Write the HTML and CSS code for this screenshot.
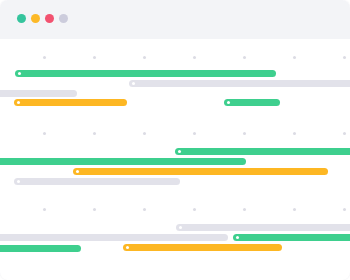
FILE: index.html
```html
<!DOCTYPE html>
<html lang="en">
  <head>
    <meta charset="UTF-8" />
    <meta name="viewport" content="width=device-width, initial-scale=1.0" />
    <title>Timeline</title>
    <link rel="stylesheet" href="styles.css">
  </head>
  <body>
    <div class="window">
      <div class="titlebar">
        <span class="light green"></span>
        <span class="light yellow"></span>
        <span class="light red"></span>
        <span class="light grey"></span>
      </div>
      <div class="chart">
        <div class="section">
          <div class="ticks">
            <span></span><span></span><span></span><span></span><span></span><span></span><span></span>
          </div>
          <div class="lanes">
            <div class="lane"><div class="bar green start" style="left: 15px; width: 261px"></div></div>
            <div class="lane"><div class="bar grey start" style="left: 129px; width: 240px"></div></div>
            <div class="lane"><div class="bar grey" style="left: -20px; width: 97px"></div></div>
            <div class="lane">
              <div class="bar yellow start" style="left: 14px; width: 113px; top: -1px"></div>
              <div class="bar green start" style="left: 224px; width: 56px; top: -1px"></div>
            </div>
          </div>
        </div>
        <div class="section second">
          <div class="ticks">
            <span></span><span></span><span></span><span></span><span></span><span></span><span></span>
          </div>
          <div class="lanes">
            <div class="lane"><div class="bar green start" style="left: 175px; width: 200px"></div></div>
            <div class="lane"><div class="bar green" style="left: -20px; width: 266px"></div></div>
            <div class="lane"><div class="bar yellow start" style="left: 73px; width: 255px"></div></div>
            <div class="lane"><div class="bar grey start" style="left: 14px; width: 166px"></div></div>
          </div>
        </div>
        <div class="section third">
          <div class="ticks">
            <span></span><span></span><span></span><span></span><span></span><span></span><span></span>
          </div>
          <div class="lanes">
            <div class="lane"><div class="bar grey start" style="left: 176px; width: 200px"></div></div>
            <div class="lane">
              <div class="bar grey" style="left: -20px; width: 248px"></div>
              <div class="bar green start" style="left: 233px; width: 140px"></div>
            </div>
            <div class="lane">
              <div class="bar green" style="left: -20px; width: 101px; top: 1px"></div>
              <div class="bar yellow start" style="left: 123px; width: 159px"></div>
            </div>
          </div>
        </div>
      </div>
    </div>
  </body>
</html>
```

FILE: styles.css
```css
body {
  margin: 0;
  background-color: #fff;
  font-family: "Liberation Sans", Arial, sans-serif;
}
.window {
  width: 350px;
  height: 280px;
  border-radius: 8px;
  overflow: hidden;
  background-color: #fff;
  box-shadow: 0 0 2px rgba(40, 40, 80, 0.08);
}
.titlebar {
  height: 39px;
  box-sizing: border-box;
  background-color: #f3f4f7;
  display: flex;
  gap: 5px;
  padding: 14px 0 0 17px;
}
.light {
  width: 9px;
  height: 9px;
  border-radius: 50%;
}
.light.green {
  background-color: #35c49d;
}
.light.yellow {
  background-color: #fcb928;
}
.light.red {
  background-color: #f25270;
}
.light.grey {
  background-color: #ccccdc;
}
.chart {
  padding-top: 17px;
}
.section {
  height: 76px;
}
.second .lanes,
.third .lanes {
  margin-top: 13px;
}
.ticks {
  display: flex;
  gap: 47px;
  padding-left: 43px;
  height: 3px;
}
.ticks span {
  width: 3px;
  height: 3px;
  border-radius: 50%;
  background-color: #dcdce4;
}
.lanes {
  margin-top: 11px;
  display: flex;
  flex-direction: column;
  gap: 3px;
}
.lane {
  position: relative;
  height: 7px;
}
.bar {
  position: absolute;
  top: 0;
  height: 7px;
  border-radius: 4px;
}
.bar.green {
  background-color: #3ecf8e;
}
.bar.yellow {
  background-color: #fdb723;
}
.bar.grey {
  background-color: #e2e2ea;
}
.bar.start::before {
  content: "";
  position: absolute;
  left: 3px;
  top: 2px;
  width: 3px;
  height: 3px;
  border-radius: 50%;
  background-color: #fff;
}
```
